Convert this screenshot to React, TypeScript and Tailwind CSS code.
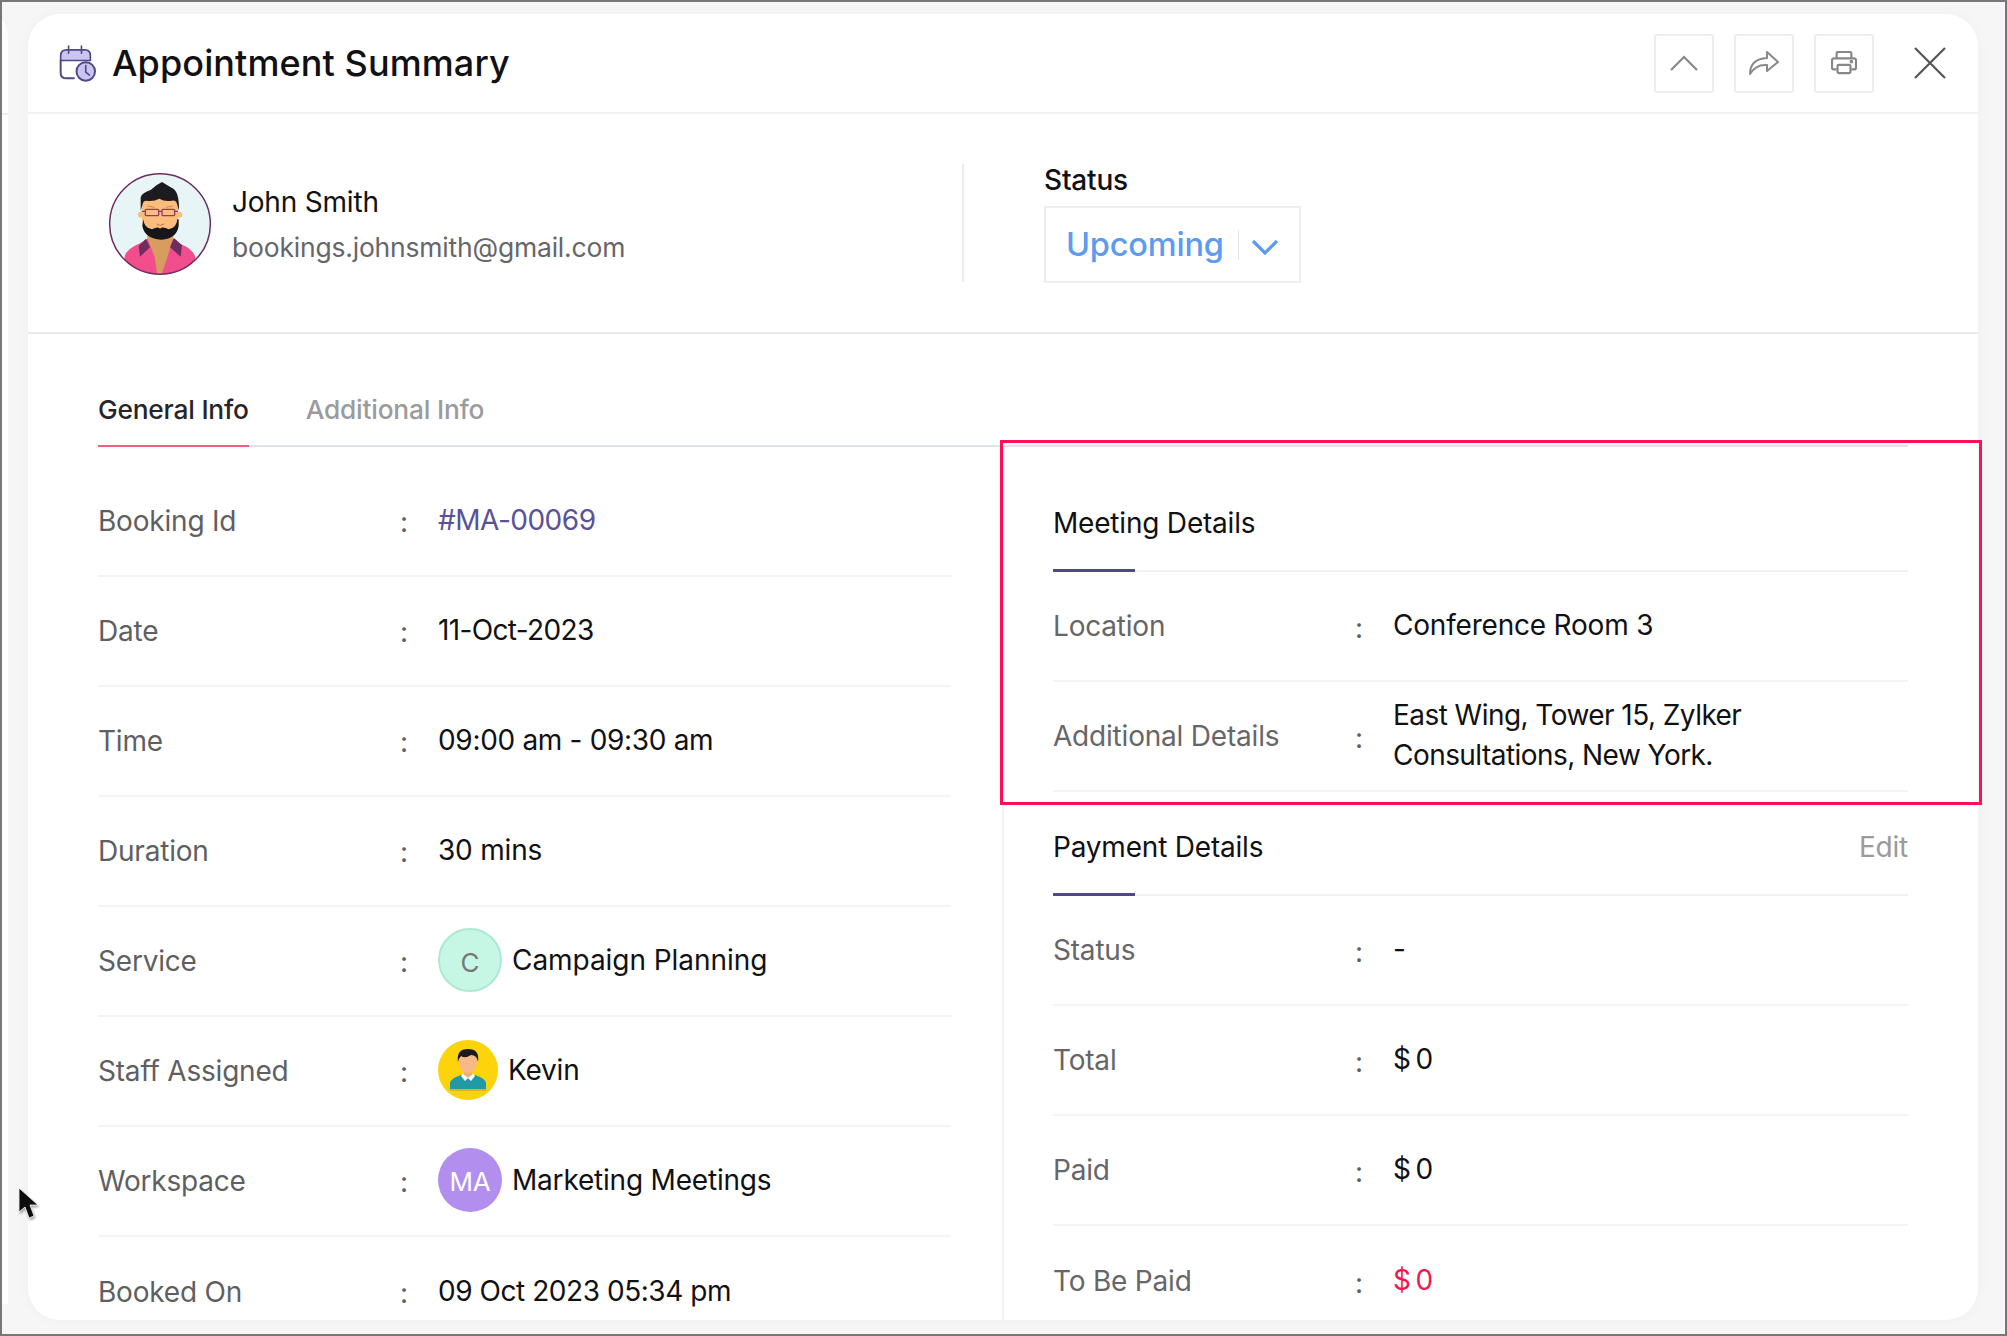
import type { ReactNode } from "react";

function CalendarIcon() {
  return (
    <svg viewBox="55 42 115 115" className="h-[38px] w-[38px] shrink-0" fill="none" stroke="#4f4a85" strokeWidth="6" strokeLinecap="round">
      <path d="M60 92 V78 Q60 60 78 60 H134 Q150 60 150 78 V92 Z" fill="#c9c4f2" strokeWidth="5" />
      <path d="M84 48 V70 M123 48 V70" strokeWidth="5" />
      <path d="M60 92 V128 Q60 146 78 146 H100" />
      <circle cx="136" cy="125" r="28" fill="#c9c4f2" />
      <path d="M136 107 V127 L147 136" strokeWidth="5" />
    </svg>
  );
}

function JohnAvatar() {
  return (
    <svg viewBox="144 66 312 312" className="h-[104px] w-[104px] shrink-0">
      <defs>
        <clipPath id="john-clip">
          <circle cx="300" cy="222" r="151" />
        </clipPath>
      </defs>
      <circle cx="300" cy="222" r="151" fill="#e8f5f7" />
      <g clipPath="url(#john-clip)">
        <path d="M194 380 V320 Q198 298 240 280 L262 266 H340 L362 282 Q400 298 406 322 V380 Z" fill="#f24d8c" />
        <path d="M262 264 H340 L322 322 L304 376 H292 L284 322 Z" fill="#d79c60" />
        <path d="M258 266 L236 288 L240 320 L270 292 Z M342 264 L366 286 L362 320 L330 292 Z" fill="#6e2c5f" />
      </g>
      <path d="M262 232 H340 V268 Q300 278 262 268 Z" fill="#d79c60" />
      <path d="M246 146 H354 V210 Q354 262 300 262 Q246 262 246 210 Z" fill="#fcbc7c" />
      <circle cx="243" cy="194" r="9" fill="#fcbc7c" />
      <circle cx="358" cy="194" r="9" fill="#fcbc7c" />
      <path d="M250 208 Q252 234 276 238 Q294 228 300 236 Q308 228 326 238 Q350 234 352 208 L356 208 V228 Q350 266 304 269 Q254 266 247 228 Z" fill="#15151a" />
      <path d="M242 182 V142 Q246 128 272 120 Q288 104 306 96 Q322 106 340 116 Q358 128 357 182 L350 158 Q346 150 336 152 Q314 156 298 146 Q280 156 258 152 Q250 152 248 162 Z" fill="#1c1c20" />
      <g fill="none" stroke="#8b3a7e" strokeWidth="4">
        <rect x="256" y="178" width="40" height="19" rx="3" />
        <rect x="306" y="178" width="38" height="19" rx="3" />
        <path d="M296 184 H306 M256 184 H245 M344 184 H354" />
      </g>
      <path d="M290 222 Q300 230 312 222" stroke="#b06a50" strokeWidth="2.5" fill="none" />
      <path d="M262 168 L284 172 M318 172 L340 168" stroke="#c07a50" strokeWidth="2.5" fill="none" />
      <circle cx="300" cy="222" r="151" fill="none" stroke="#6d2d60" strokeWidth="4.5" />
    </svg>
  );
}

function KevinAvatar() {
  return (
    <svg viewBox="0 0 60 60" className="h-[60px] w-[60px] shrink-0">
      <defs>
        <clipPath id="kevin-clip">
          <circle cx="30" cy="30" r="30" />
        </clipPath>
      </defs>
      <circle cx="30" cy="30" r="30" fill="#fdd40b" />
      <g clipPath="url(#kevin-clip)">
        <path d="M12 51 V43 Q13 38 23 35 L30 38 L37 35 Q47 38 48 43 V51 Z" fill="#219aa6" />
        <rect x="12" y="49" width="36" height="2" fill="#e0b028" />
        <path d="M26 28 H34 V35 L30 39 L26 35 Z" fill="#eeae7e" />
        <path d="M25 34 L30 38 L35 34 L37 36 L33 41 L30 38 L27 41 L23 36 Z" fill="#fff" />
        <ellipse cx="30" cy="22" rx="9" ry="11" fill="#f7b98a" />
        <path d="M20 22 Q18 9 30 9 Q42 9 40 22 Q39 15 33 15 Q27 19 23 16 Q21 18 20 22 Z" fill="#1b1b1f" />
      </g>
    </svg>
  );
}

function Cursor() {
  return (
    <svg viewBox="0 0 24 36" className="absolute left-[15px] top-[1185px] h-[36px] w-[24px] drop-shadow-[1px_2px_1px_rgba(0,0,0,0.35)]">
      <path d="M2 1 V25 L8 20 L12 31 L17 29 L13 18 L21 18 Z" fill="#0c0c0c" stroke="#fff" strokeWidth="0.8" />
    </svg>
  );
}

const iconButton = "flex h-[59px] w-[60px] items-center justify-center rounded-[3px] border-2 border-[#eeeeee]";

function Row({ label, children, last }: { label: string; children: ReactNode; last?: boolean }) {
  return (
    <div className={`flex h-[110px] shrink-0 items-center ${last ? "" : "border-b-2 border-[#f4f4f5]"}`}>
      <div className="w-[302px] shrink-0 text-[#5f5f62]">{label}</div>
      <div className="w-[38px] shrink-0 translate-y-[1px] text-[#5f5f62]">:</div>
      <div className="flex -translate-y-[1px] items-center text-[#111114]">{children}</div>
    </div>
  );
}

function DetailRow({ label, children, last }: { label: string; children: ReactNode; last?: boolean }) {
  return (
    <div className={`flex h-[110px] shrink-0 items-center ${last ? "" : "border-b-2 border-[#f4f4f5]"}`}>
      <div className="w-[302px] shrink-0 text-[#666669]">{label}</div>
      <div className="w-[38px] shrink-0 translate-y-[2px] text-[#5f5f62]">:</div>
      <div className="-translate-y-[1px] text-[#111114]">{children}</div>
    </div>
  );
}

function SectionTitle({ title, action }: { title: string; action?: string }) {
  return (
    <div className="relative flex items-center justify-between border-b-2 border-[#f1f1f3] pb-[27px] leading-[40px]">
      <span className="text-[#111114]">{title}</span>
      {action && <span className="text-[#9a9a9d]">{action}</span>}
      <span className="absolute -bottom-[2px] left-0 h-[3px] w-[82px] bg-[#4f4a85]" />
    </div>
  );
}

export default function App() {
  return (
    <div
      className="relative flex h-[1336px] w-[2007px] overflow-hidden border-y-2 border-x-2 border-[#77777a] bg-[#f6f6f7]"
      style={{ fontFamily: "Inter, 'Noto Sans', sans-serif" }}
    >
      {/* panel peeking out behind the modal */}
      <div className="mt-[18px] mb-[30px] w-[6px] shrink-0 rounded-tr-[6px_26px] bg-white">
        <div className="mt-[93px] h-[2px] bg-[#efeff0]" />
      </div>

      <div className="mt-[12px] ml-[20px] flex h-[1306px] w-[1950px] shrink-0 flex-col overflow-hidden rounded-[32px] bg-white text-[28px] tracking-[-0.2px] shadow-[0_0_14px_rgba(0,0,0,0.03)]">
        <header className="flex h-[100px] shrink-0 items-center border-b-2 border-[#f1f1f2] pl-[31px] pr-[32px]">
          <CalendarIcon />
          <h1 className="ml-[15px] text-[36px] font-medium tracking-[0.1px] text-[#111114]">Appointment Summary</h1>
          <div className="ml-auto flex items-center gap-[20px]">
            <div className={iconButton}>
              <svg width="30" height="18" viewBox="0 0 30 18" fill="none" stroke="#888" strokeWidth="2.2">
                <path d="M2 16 L15 3 L28 16" />
              </svg>
            </div>
            <div className={iconButton}>
              <svg width="32" height="26" viewBox="0 0 32 26" fill="none" stroke="#888" strokeWidth="2" strokeLinejoin="round">
                <path d="M2 24 Q2 9 19 8 V2 L30 12 L19 21 V15 Q8 14 2 24 Z" />
              </svg>
            </div>
            <div className={iconButton}>
              <svg width="26" height="24" viewBox="0 0 28 26" fill="none" stroke="#888" strokeWidth="2.4">
                <path d="M6 8 V3 Q6 1 8 1 H20 Q22 1 22 3 V8" />
                <path d="M6 20 H3 Q1 20 1 18 V10 Q1 8 3 8 H25 Q27 8 27 10 V18 Q27 20 25 20 H22" />
                <rect x="7" y="15" width="14" height="9" rx="1.5" />
                <circle cx="22" cy="11.5" r="0.8" fill="#888" />
              </svg>
            </div>
            <svg className="ml-[20px]" width="32" height="32" viewBox="0 0 32 32" fill="none" stroke="#555558" strokeWidth="2.2">
              <path d="M1 1 L31 31 M31 1 L1 31" />
            </svg>
          </div>
        </header>

        <section className="flex h-[220px] shrink-0 border-b-2 border-[#e9e9ee] pl-[80px]">
          <div className="flex w-[854px] shrink-0 items-center gap-[20px] pt-[2px]">
            <JohnAvatar />
            <div className="flex flex-col gap-[9px]">
              <div className="text-[28px] leading-[36px] text-[#111114]">John Smith</div>
              <div className="text-[26.5px] leading-[36px] text-[#666669]">bookings.johnsmith@gmail.com</div>
            </div>
          </div>
          <div className="mt-[50px] h-[118px] w-[2px] shrink-0 bg-[#ececee]" />
          <div className="ml-[80px] flex flex-col pt-[48px]">
            <div className="text-[28px] font-medium leading-[36px] text-[#111114]">Status</div>
            <div className="mt-[8px] flex h-[77px] w-[257px] items-center border-2 border-[#eeeeef] pl-[20px]">
              <span className="translate-y-[1px] text-[32.5px] font-medium tracking-[-0.2px] text-[#5c9bef]">Upcoming</span>
              <span className="ml-[14px] h-[30px] w-[1px] bg-[#e4e4e6]" />
              <svg className="ml-[12px] mt-[4px]" width="28" height="16" viewBox="0 0 28 16" fill="none" stroke="#5c9bef" strokeWidth="3.2">
                <path d="M2 2 L14 14 L26 2" />
              </svg>
            </div>
          </div>
        </section>

        <div className="mx-[70px] flex h-[113px] shrink-0 items-end gap-[57px] border-b-2 border-[#dfe1ec] text-[26.3px] font-medium leading-[40px]">
          <div className="-mb-[2px] border-b-2 border-[#f0607a] pb-[15px] text-[#26262a]">General Info</div>
          <div className="pb-[15px] text-[#9b9b9e]">Additional Info</div>
        </div>

        <div className="flex min-h-0 flex-1 pl-[70px]">
          <div className="flex w-[853px] shrink-0 flex-col pt-[20px]">
            <Row label="Booking Id">
              <span className="tracking-[-0.5px] text-[#5a5199]">#MA-00069</span>
            </Row>
            <Row label="Date">
              <span className="tracking-[-0.65px]">11-Oct-2023</span>
            </Row>
            <Row label="Time">
              <span className="tracking-[-0.32px]">09:00 am - 09:30 am</span>
            </Row>
            <Row label="Duration">30 mins</Row>
            <Row label="Service">
              <span className="flex h-[64px] w-[64px] items-center justify-center rounded-full border-2 border-[#ace9d3] bg-[#c6f6e4] pt-[4px] text-[26px] text-[#77777a]">C</span>
              <span className="ml-[10px] tracking-[-0.05px]">Campaign Planning</span>
            </Row>
            <Row label="Staff Assigned">
              <KevinAvatar />
              <span className="ml-[10px]">Kevin</span>
            </Row>
            <Row label="Workspace">
              <span className="flex h-[64px] w-[64px] items-center justify-center rounded-full bg-[#b28eef] pt-[2px] text-[26px] text-white">MA</span>
              <span className="ml-[10px]">Marketing Meetings</span>
            </Row>
            <Row label="Booked On" last>
              <span className="tracking-[-0.45px]">09 Oct 2023 05:34 pm</span>
            </Row>
          </div>

          <div className="ml-[51px] flex w-[906px] shrink-0 flex-col border-l-2 border-[#f1f1f3] pl-[49px]">
            <div className="pt-[56px]">
              <SectionTitle title="Meeting Details" />
            </div>
            <DetailRow label="Location">Conference Room 3</DetailRow>
            <DetailRow label="Additional Details">
              <div className="w-[420px] leading-[40px] tracking-[-0.55px]">East Wing, Tower 15, Zylker Consultations, New York.</div>
            </DetailRow>
            <div className="pt-[35px]">
              <SectionTitle title="Payment Details" action="Edit" />
            </div>
            <DetailRow label="Status">-</DetailRow>
            <DetailRow label="Total">
              <span className="[word-spacing:-3px]">$ 0</span>
            </DetailRow>
            <DetailRow label="Paid">
              <span className="[word-spacing:-3px]">$ 0</span>
            </DetailRow>
            <DetailRow label="To Be Paid" last>
              <span className="text-[#f0194f] [word-spacing:-3px]">$ 0</span>
            </DetailRow>
          </div>
        </div>
      </div>

      {/* highlight drawn over the screenshot */}
      <div className="absolute left-[998px] top-[438px] h-[365px] w-[982px] border-[3px] border-[#ff0f55]" />
      <Cursor />
    </div>
  );
}
